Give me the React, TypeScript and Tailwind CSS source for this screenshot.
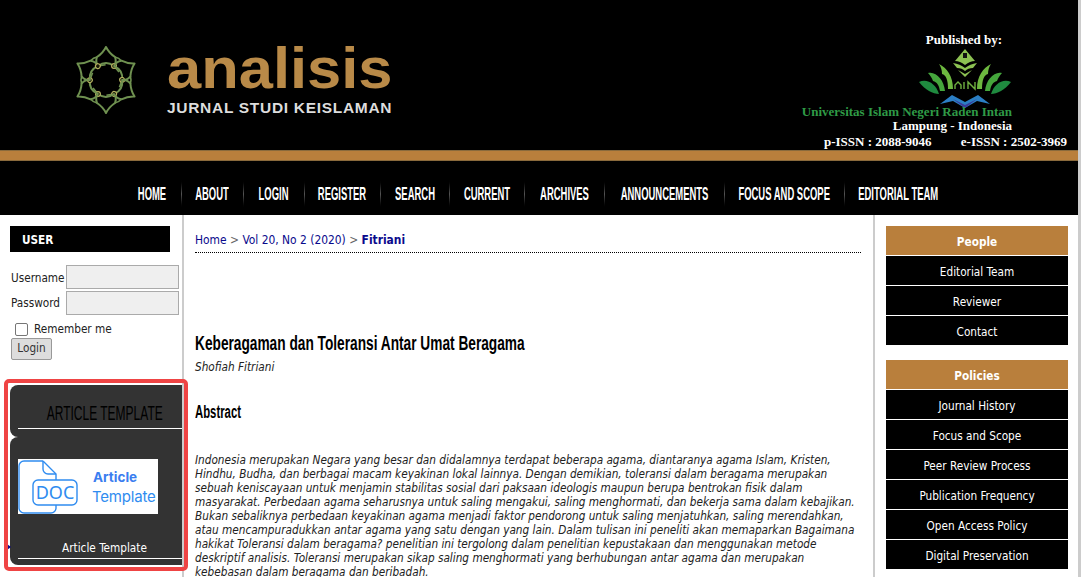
const navItems = [
  { label: 'HOME', w: 'w-[29px]' },
  { label: 'ABOUT', w: 'w-[32px]' },
  { label: 'LOGIN', w: 'w-[31px]' },
  { label: 'REGISTER', w: 'w-[46px]' },
  { label: 'SEARCH', w: 'w-[39px]' },
  { label: 'CURRENT', w: 'w-[45px]' },
  { label: 'ARCHIVES', w: 'w-[50px]' },
  { label: 'ANNOUNCEMENTS', w: 'w-[90px]' },
  { label: 'FOCUS AND SCOPE', w: 'w-[90px]' },
  { label: 'EDITORIAL TEAM', w: 'w-[79px]' },
];

const abstractLines = [
  'Indonesia merupakan Negara yang besar dan didalamnya terdapat beberapa agama, diantaranya agama Islam, Kristen,',
  'Hindhu, Budha, dan berbagai macam keyakinan lokal lainnya. Dengan demikian, toleransi dalam beragama merupakan',
  'sebuah keniscayaan untuk menjamin stabilitas sosial dari paksaan ideologis maupun berupa bentrokan fisik dalam',
  'masyarakat. Perbedaan agama seharusnya untuk saling mengakui, saling menghormati, dan bekerja sama dalam kebajikan.',
  'Bukan sebaliknya perbedaan keyakinan agama menjadi faktor pendorong untuk saling menjatuhkan, saling merendahkan,',
  'atau mencampuradukkan antar agama yang satu dengan yang lain. Dalam tulisan ini peneliti akan memaparkan Bagaimana',
  'hakikat Toleransi dalam beragama? penelitian ini tergolong dalam penelitian kepustakaan dan menggunakan metode',
  'deskriptif analisis. Toleransi merupakan sikap saling menghormati yang berhubungan antar agama dan merupakan',
  'kebebasan dalam beragama dan beribadah.',
];

const sideBlocks = [
  { title: 'People', links: ['Editorial Team', 'Reviewer', 'Contact'] },
  {
    title: 'Policies',
    links: [
      'Journal History',
      'Focus and Scope',
      'Peer Review Process',
      'Publication Frequency',
      'Open Access Policy',
      'Digital Preservation',
    ],
  },
];

function Emblem() {
  const petals = [0, 60, 120, 180, 240, 300];
  return (
    <svg width="66" height="76" viewBox="-33 -38 66 76" fill="none" className="shrink-0">
      {petals.map((r) => (
        <g key={r} transform={`rotate(${r})`} stroke="#6f9150" strokeLinejoin="round">
          <path d="M0 -33 Q-3 -27 -9 -23 Q-11 -18 -8 -14 Q0 -20 8 -14 Q11 -18 9 -23 Q3 -27 0 -33 Z" strokeWidth="2" />
          <path d="M9 -23 Q13 -22 15.4 -19.3 M8 -14 L13 -8" strokeWidth="1.6" />
          <circle cx="8" cy="-14" r="2.4" fill="#1a1a0a" stroke="#b4b060" strokeWidth="1.2" />
        </g>
      ))}
    </svg>
  );
}

function LotusLeaves() {
  return (
    <>
      <path d="M24 20 C32 24 38 32 38 45 L33 45 C33 36 31 31 27 30 C27 26 26 23 24 20 Z" fill="#6db83f" />
      <path d="M13 29 C21 27 29 36 30 47 L25 47 C24 41 22 38 18 37 C17 34 15 31 13 29 Z" fill="#45a63c" />
      <path d="M4 38 C12 34 21 40 24 50 C18 50 10 46 4 38 Z" fill="#1f8a3f" />
    </>
  );
}

function LotusLogo() {
  return (
    <svg width="100" height="65" viewBox="0 0 100 65" className="mr-[52px] -mt-[2px] shrink-0">
      <path d="M50 5 L60 17 Q55 17 50 21 Q45 17 40 17 Z" fill="#8cc152" />
      <path d="M38 19 Q45 20 50 24 Q55 20 62 19 L58 24 Q53 24 50 27 Q47 24 42 24 Z" fill="#8cc152" />
      <path d="M43 26 L50 30 L57 26 L50 33 Z" fill="#8cc152" />
      <path d="M48 9 H52 V14 H48 Z" fill="#111" />
      <LotusLeaves />
      <g transform="translate(100 0) scale(-1 1)">
        <LotusLeaves />
      </g>
      <path d="M40 45 V41 L43 38 L46 41 V45 M49 38 V45 M53 45 V38 L60 45 V38" stroke="#6fb040" strokeWidth="1.4" fill="none" />
      <path d="M25 60 L37 51 L50 58 L63 51 L75 60 L62 57 L50 64 L38 57 Z" fill="#2b7fc4" />
      <path d="M38 55 L50 61 L62 55 L50 64 Z" fill="#3a3a9a" />
    </svg>
  );
}

function DocBanner() {
  return (
    <div className="flex h-[55px] w-[140px] items-center bg-white">
      <svg width="62" height="55" viewBox="0 0 62 55" fill="none" stroke="#2f8cf0" strokeWidth="1.4" className="shrink-0">
        <path d="M25 2 H6 a5 5 0 0 0 -5 5 V49 a5 5 0 0 0 5 5 H33 a5 5 0 0 0 5 -5 V46" />
        <path d="M25 2 L38 15 V21" />
        <path d="M25 2 V10 a5 5 0 0 0 5 5 H38" />
        <rect x="15" y="21" width="44" height="25" rx="5" />
        <text x="37" y="40" textAnchor="middle" stroke="none" fill="#2f8cf0" fontFamily="Noto Sans, sans-serif" fontSize="18">
          DOC
        </text>
      </svg>
      <div className="ml-[12px] flex flex-col items-start font-['Inter',sans-serif] leading-[19px] text-[#2f8cf0]">
        <span className="ml-px text-[13.5px] font-bold text-[#3a7df0]">Article</span>
        <span className="text-[15px] tracking-[-0.2px]">Template</span>
      </div>
    </div>
  );
}

export default function App() {
  return (
    <div className="flex h-[577px] w-[1081px] overflow-hidden bg-white font-['DejaVu_Sans_Condensed','DejaVu_Sans',sans-serif] text-[11.7px] text-[#222]">
      <div className="flex w-[1078px] shrink-0 flex-col">
        <header className="flex h-[215px] shrink-0 flex-col bg-black">
          <div className="flex h-[150px] shrink-0 justify-between">
            <div className="ml-[73px] mt-[42px] flex gap-[28px]">
              <Emblem />
              <div className="-mt-[2px] flex flex-col">
                <span className="h-[56px] w-[225px] whitespace-nowrap">
                  <span className="inline-block origin-left scale-x-[1.06] font-['Liberation_Sans',sans-serif] text-[58px] font-bold leading-[56px] text-[#b98a48]">
                    analisis
                  </span>
                </span>
                <span className="mt-[4px] whitespace-nowrap font-['Liberation_Sans',sans-serif] text-[15.5px] font-bold leading-[16px] tracking-[0.7px] text-[#ddd]">
                  JURNAL STUDI KEISLAMAN
                </span>
              </div>
            </div>
            <div className="flex flex-col items-end pr-[11px] pt-[33px] font-['Liberation_Serif',serif] text-[13px] font-bold text-white">
              <span className="mr-[65px] leading-[13px]">Published by:</span>
              <LotusLogo />
              <span className="mr-[55px] -mt-[4px] whitespace-nowrap leading-[14px] text-[#2f9a46]">
                Universitas Islam Negeri Raden Intan
              </span>
              <span className="mr-[55px] leading-[13px]">Lampung - Indonesia</span>
              <span className="mt-[3px] flex w-[243px] justify-between leading-[13px]">
                <span>p-ISSN : 2088-9046</span>
                <span>e-ISSN : 2502-3969</span>
              </span>
            </div>
          </div>
          <div className="h-[11px] shrink-0 border-y border-[#8a6a3c] bg-[#b97f3c]" />
          <nav className="mt-[13px] flex h-[40px] items-center justify-center pr-[3px]">
            {navItems.map((item, i) => (
              <div key={item.label} className="flex h-[40px] items-center">
                {i > 0 && <div className="-mr-px h-[30px] w-px bg-gradient-to-b from-black via-[#555] to-black" />}
                <span className={`${item.w} mx-[15px] flex justify-center whitespace-nowrap font-['Liberation_Sans',sans-serif] text-[18px] font-bold text-white`}>
                  <span className="inline-block scale-x-[.525]">{item.label}</span>
                </span>
              </div>
            ))}
          </nav>
        </header>

        <div className="relative flex min-h-0 flex-1">
          <aside className="w-[184px] shrink-0 border-r-2 border-[#ccc] pt-[11px]">
            <div className="ml-[10px] flex h-[26px] w-[160px] items-center bg-black pl-[12px] pt-[4px] font-bold text-white">USER</div>
            <div className="ml-[10px] mt-[13px] flex items-center">
              <span className="w-[56px] pl-px pt-[3px]">Username</span>
              <div className="h-[24px] w-[113px] border border-[#aaa] bg-[#efefef]" />
            </div>
            <div className="ml-[10px] mt-[2px] flex items-center">
              <span className="w-[56px] pl-px pt-[2px]">Password</span>
              <div className="h-[24px] w-[113px] border border-[#aaa] bg-[#efefef]" />
            </div>
            <div className="ml-[15px] mt-[5px] flex h-[18px] items-center gap-[6px]">
              <div className="h-[13px] w-[13px] rounded-[2px] border border-[#767676] bg-white" />
              <span className="pt-px">Remember me</span>
            </div>
            <div className="ml-[11px] flex h-[22px] w-[41px] items-center justify-center rounded-[2px] border border-[#999] bg-[#ddd] text-[#333]">
              Login
            </div>

            <div className="relative ml-[10px] mt-[25px] text-white">
              <div className="h-[52px] rounded-l-[8px] bg-[#333] pl-[8px]">
                <div className="flex h-[44px] items-end justify-center border-b border-white pb-[3px] pl-[9px] font-['Liberation_Sans',sans-serif] text-[20px] leading-[24px] text-black">
                  <span className="inline-block scale-x-[.6] whitespace-nowrap">ARTICLE TEMPLATE</span>
                </div>
              </div>
              <div className="h-[128px] rounded-l-[8px] bg-[#333] pl-[8px] pt-[22px]">
                <DocBanner />
                <div className="mt-[26px] flex h-[19px] items-center justify-center border-b border-white pb-px pl-[9px]">
                  Article Template
                </div>
              </div>
              <div className="absolute -left-[3px] top-[159px] h-0 w-0 border-y-[3px] border-l-[4px] border-y-transparent border-l-[#0a0a8c]" />
            </div>
          </aside>

          <main className="w-[691px] shrink-0 border-r-2 border-[#ccc] px-[11px] pt-[18px]">
            <div className="w-[666px] border-b border-dotted border-black pb-[4px] text-[11.9px] leading-[15px] text-[#666]">
              <span className="text-[#0a0a8c]">Home</span> &gt; <span className="text-[#0a0a8c]">Vol 20, No 2 (2020)</span> &gt;{' '}
              <span className="font-bold text-[#0a0a8c]">Fitriani</span>
            </div>
            <h1 className="mt-[78px] whitespace-nowrap font-['Liberation_Sans',sans-serif] text-[20px] font-bold leading-[24px] text-black">
              <span className="inline-block origin-left scale-x-[.685]">Keberagaman dan Toleransi Antar Umat Beragama</span>
            </h1>
            <div className="mt-[5px] italic leading-[15px]">Shofiah Fitriani</div>
            <h2 className="mt-[27px] whitespace-nowrap font-['Liberation_Sans',sans-serif] text-[18px] font-bold leading-[20px] text-black">
              <span className="inline-block origin-left scale-x-[.63]">Abstract</span>
            </h2>
            <div className="mt-[31px] italic leading-[14px]">
              {abstractLines.map((line) => (
                <p key={line} className="whitespace-nowrap">
                  {line}
                </p>
              ))}
            </div>
          </main>

          <aside className="flex flex-1 flex-col gap-[15px] pl-[11px] pt-[11px]">
            {sideBlocks.map((block) => (
              <div key={block.title} className="flex w-[182px] flex-col gap-px">
                <div className="flex h-[29px] items-center justify-center bg-[#b97f3c] pt-[4px] font-bold text-white">{block.title}</div>
                {block.links.map((link) => (
                  <div key={link} className="flex h-[29px] items-center justify-center bg-black pt-[4px] text-white">
                    {link}
                  </div>
                ))}
              </div>
            ))}
          </aside>

          <div className="pointer-events-none absolute left-[4px] top-[164px] h-[192px] w-[184px] rounded-[5px] border-[4px] border-[#ef4444]" />
        </div>
      </div>
      <div className="w-[3px] shrink-0 bg-[#ccc]" />
    </div>
  );
}
